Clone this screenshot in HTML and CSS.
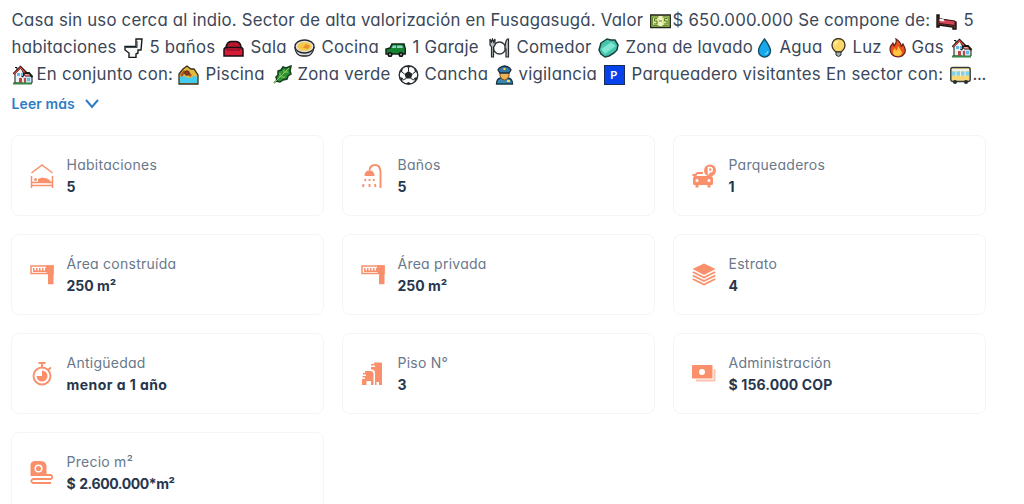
FILE: index.html
```
<!DOCTYPE html>
<html lang="es">
<head>
<meta charset="utf-8">
<title>Casa en Fusagasugá</title>
<link rel="stylesheet" href="styles.css">
</head>
<body>
<svg class="defs" aria-hidden="true">
  <symbol id="house" viewBox="0 0 21 20">
    <path d="M3 2.5h2v4M2 18h18v-7h-7L9 3 3 8v10" fill="#eef2f4" stroke="#111" stroke-width="1"/>
    <path d="M11 12h8v6h-8z" fill="#cfe1ed"/><path d="M1.5 9 8.5 2l6 6M10 12l2.5-4H17l3.5 4" fill="none" stroke="#151515" stroke-width="2.2"/>
    <path d="M2 9 8.500 2.600 13 7.500M12 10h6" fill="none" stroke="#df4937" stroke-width="1.200"/>
    <path d="M5 8h3v3H5zM9 8h2v3H9zM15 13h3v3h-3z" fill="#63b9e7"/><path d="M7 13h3v5H7zM12 13h2v5h-2z" fill="#b94940"/>
    <path d="M1 18.500h19" stroke="#358746" stroke-width="2"/>
  </symbol>
</svg>
<main class="page">
  <section class="description">
    <div class="line line-one">
      <span>Casa sin uso cerca al indio. Sector de alta valorización en Fusagasugá. Valor</span>
      <svg class="emoji" viewBox="0 0 21 20"><path d="M.7 4h19.600v12.500H.7z" fill="#a9c75b" stroke="#20251b" stroke-width="1.300"/><path d="M2.500 6h15.700v8.500H2.500z" fill="#d2e48e" stroke="#698b36"/><path d="M8.500 5h4v10h-4z" fill="#f2f1bf"/><path d="M7 7.500H4.500V10H7v3H4M17 7.500h-2.500V10H17v3h-3M9 10h3" stroke="#587c29" fill="none"/></svg>
      <span>$ 650.000.000 Se compone de:</span>
      <svg class="emoji" viewBox="0 0 21 20"><path d="M1 4v12h2v-2l14 2v2h3v-7L3 8V4z" fill="#713c32" stroke="#17100f" stroke-width="1.400"/><path d="m5 8 14 2v4.500L3 12.500V9z" fill="#d84558" stroke="#351718"/><path d="M3.500 8h4l1 2.500-5-.5z" fill="#eef4f7"/></svg>
      <span>5</span>
    </div>
    <div class="line line-two">
      <span>habitaciones</span>
      <svg class="emoji" viewBox="0 0 21 20"><path d="M12 1h6l-1 11h-3v3l-2 1v3.500H5V15l-4-3V8.500h11z" fill="#f7f8f8" stroke="#161a1c" stroke-width="1.400"/><path d="M1.500 9.500h12M13 3v6" stroke="#424b50" stroke-width="1.200"/></svg>
      <span>5 baños</span>
      <svg class="emoji" viewBox="0 0 21 20"><path d="M3 12V9q1-5 5-5.500h5Q17.500 4 18 9v3" fill="#b8182d" stroke="#1b1114" stroke-width="1.600"/><path d="M1 12q0-2.500 2.500-2.500h14q2.500 0 2.500 2.500v6H1z" fill="#d91b38" stroke="#1b1114" stroke-width="1.500"/><path d="M4 10v2h13v-2" fill="none" stroke="#6c1020"/></svg>
      <span>Sala</span>
      <svg class="emoji" viewBox="0 0 21 20"><path d="M.8 9q1 9 7.700 9h4q6 0 7.700-9" fill="#d8dadd" stroke="#25282a" stroke-width="1.300"/><ellipse cx="10.500" cy="8.500" rx="9.500" ry="6.500" fill="#e4e6e8" stroke="#25282a" stroke-width="1.300"/><ellipse cx="10.500" cy="8.500" rx="7.300" ry="4.500" fill="#f6c94a"/><path d="m5 9 4 1 3-4 4 2-2 3-4-1z" fill="#e9902c"/></svg>
      <span>Cocina</span>
      <svg class="emoji" viewBox="0 0 21 20"><path d="M1 16v-5l4-1 2-4h12l1.300 5v5z" fill="#168331" stroke="#102c18" stroke-width="1.500"/><path d="M6.500 10 8 7.500h3V10zM12 7.500h5l1 2.500h-6z" fill="#8bd3c5"/><circle cx="5" cy="16.500" r="1.800" fill="#9ba3a0" stroke="#111" stroke-width="1.500"/><circle cx="16" cy="16.500" r="1.800" fill="#9ba3a0" stroke="#111" stroke-width="1.500"/></svg>
      <span>1 Garaje</span>
      <svg class="emoji" viewBox="0 0 21 20"><circle cx="10.500" cy="10" r="6" fill="#fff" stroke="#35393b" stroke-width="1.400"/><path d="M1 1v6l1.500 2v10h2V9L6 7V1L4.500 4 3.500 1 2.500 4zM18.500 1Q16 3 16 11h1v8h2.500V1z" fill="#b9bec0" stroke="#272b2d" stroke-width="1.200"/></svg>
      <span>Comedor</span>
      <svg class="emoji" viewBox="0 0 21 20"><path d="m3 5 3-2 3-2 4 1 4 0 3 5-1 5-3 3-5 3-4 1-4-3-2-4z" fill="#45c5ad" stroke="#193f3a" stroke-width="1.500"/><path d="m3 11 10-7 5 4-11 8z" fill="#7ee8d3" stroke="#5bd0bc"/></svg>
      <span>Zona de lavado</span>
      <svg class="emoji" viewBox="0 0 21 20"><path d="M10.500 1Q4.500 9 4.500 13a6 6 0 0 0 12 0q0-4-6-12z" fill="#16a8e8" stroke="#124a67" stroke-width="1.300"/><path d="M14 13q0 3-3 3" fill="none" stroke="#8be0ff"/></svg>
      <span>Agua</span>
      <svg class="emoji" viewBox="0 0 21 20"><path d="M8 14Q4 11 4 7a6.500 6.500 0 0 1 13 0q0 4-4 7z" fill="#fbd76a" stroke="#3d321f" stroke-width="1.300"/><path d="M8 14h5v3q-2.500 3-5 0z" fill="#a9b0b2" stroke="#262f34"/><path d="M7 7q0-3 3-3.500" fill="none" stroke="#fff0b8" stroke-width="1.500"/></svg>
      <span>Luz</span>
      <svg class="emoji" viewBox="0 0 21 20"><path d="M9 1q6 4 5 8l2-3q4 7 1 10-2 3-6 3-8-1-8-8 0-3 3-6l1 3q3-3 2-7z" fill="#ef5020" stroke="#5f2419" stroke-width="1.200"/><path d="M11 8q4 6 4 7-1 3-4.500 3Q6 18 6 14q0-2 2-4l1 3q2-2 2-5z" fill="#ffc83d"/></svg>
      <span>Gas</span>
      <svg class="emoji"><use href="#house"/></svg>
    </div>
    <div class="line line-three">
      <svg class="emoji"><use href="#house"/></svg>
      <span>En conjunto con:</span>
      <svg class="emoji" viewBox="0 0 21 20"><path d="M1 9 5 4l4-3 4 3h3l4 6v9H1z" fill="#e5b93e" stroke="#36301c" stroke-width="1.300"/><path d="M2 12q3-2 6 0t6 0 5 0v6H2z" fill="#45cbed"/><path d="m3 11 3-4 4 1 3 3" fill="none" stroke="#a94e28" stroke-width="2.500"/><circle cx="9" cy="8" r="2.200" fill="#9a3e20" stroke="#4c2615"/></svg>
      <span>Piscina</span>
      <svg class="emoji" viewBox="0 0 21 20"><path d="m5 16-1-4 2-2V6l3-1 2-3 3 1 5-2-1 5 1 3-3 2-1 3-4 1-3 2-4-1-2 2" fill="#299238" stroke="#163d20" stroke-width="1.500"/><path d="M2 18 17 3M8 12V8M12 8V5M13 7h3M9 12h4" fill="none" stroke="#91cb4c"/></svg>
      <span>Zona verde</span>
      <svg class="emoji" viewBox="0 0 21 20"><circle cx="10.500" cy="10" r="9.300" fill="#fff" stroke="#292f32" stroke-width="1.400"/><path d="m10.500 6 4 3-1.500 4.500H8L6.500 9zM7 1l3.500 2L14 1zM1 8l3-1 1-4zM20 8l-3-1-1-4zM4 17l1-4-3-1zM17 17l-1-4 3-1zM7 19l3.500-2 3.500 2z" fill="#202628"/><path d="M10.500 6V3M6.500 9 4 7M14.500 9 17 7M8 13.500 5 15M13 13.500l3 1.500" stroke="#202628"/></svg>
      <span>Cancha</span>
      <svg class="emoji police" viewBox="0 0 21 20"><path d="M2.500 19q0-5 4-6h8q4 1 4 6z" fill="#3c86b2" stroke="#173849" stroke-width="1.300"/><path d="M6 6h9v5q-1.500 4-4.500 4T6 11z" fill="#efb253" stroke="#815327"/><path d="M4 5q1-3 6.500-4Q16 2 17 5l-2 3H6z" fill="#3477a4" stroke="#162d40" stroke-width="1.300"/><path d="M10.500 3v2M13 16h3" stroke="#ffd54b" stroke-width="2"/></svg>
      <span>vigilancia</span>
      <span class="parking-emoji">P</span>
      <span>Parqueadero visitantes En sector con:</span>
      <svg class="emoji" viewBox="0 0 21 20"><rect x=".8" y="2.500" width="19.400" height="14" rx="2" fill="#f8d878" stroke="#343b3c" stroke-width="1.400"/><path d="M2 4h17v2H2z" fill="#eef2ef"/><path d="M2 6.500h17v4H2z" fill="#7ed3ec"/><path d="M6 6v5M10.500 6v5M15 6v5" stroke="#edf3e9"/><circle cx="5" cy="17" r="2" fill="#282f31"/><circle cx="16" cy="17" r="2" fill="#282f31"/></svg>
      <span class="ellipsis">...</span>
    </div>
    <a class="more"><span>Leer más</span><svg width="14" height="10" viewBox="0 0 14 10"><path d="m1.500 1.500 5.500 6.500 5.500-6.500" fill="none" stroke="currentColor" stroke-width="2" stroke-linecap="round"/></svg></a>
  </section>

  <section class="cards">
    <article class="card"><svg class="icon" viewBox="0 0 24 24"><path d="m1.500 9 10.500-8 10.500 8" class="stroke"/><path d="M1.500 12v12M22.500 12v12M1.500 18.500h21M1.500 21.500h21" class="stroke"/><circle cx="5.500" cy="15.500" r="1.500"/><path d="M8 18v-3l4-1.500 5 1q3 1 4 3.500z"/></svg><div><p>Habitaciones</p><strong>5</strong></div></article>
    <article class="card"><svg class="icon" viewBox="0 0 24 24"><path d="M19.500 24V7.500Q19 1 14 1T8.500 6.500" class="stroke thick"/><path d="M3.500 12q0-5.500 5-5.500t5 5.500z"/><path d="m4.500 15-.5 2M8.500 15v2M12.500 15l.5 2M2.500 20l-.5 3M8.500 20v3M14 20l.5 3" class="stroke thick"/></svg><div><p>Baños</p><strong>5</strong></div></article>
    <article class="card"><svg class="icon" viewBox="0 0 24 24"><circle cx="18" cy="6.500" r="6"/><path d="M16.500 10.500V3.500H18a2.200 2.200 0 0 1 0 4.400h-1.500" fill="none" stroke="#fff" stroke-width="1.600"/><path d="M3 13q1-4 3-4h5M.5 11h3" class="stroke thick"/><path fill-rule="evenodd" d="M3 12h15q3 0 3 3v4q0 2-1 2H2q-1 0-1-2v-4q0-3 2-3zm.5 4.500a1.500 1.500 0 1 0 3 0a1.500 1.500 0 1 0-3 0zm12 0a1.500 1.500 0 1 0 3 0a1.500 1.500 0 1 0-3 0z"/><path d="M5 21v2.500M17 21v2.500" class="stroke heavy"/></svg><div><p>Parqueaderos</p><strong>1</strong></div></article>
    <article class="card"><svg class="icon" viewBox="0 0 24 24"><path d="M1 3h22v7.500H1z" class="stroke"/><path d="M17 2.300h6.500v19H18V11l-2-2V3zM3 5h1.500v2.500H6V5h1.500v2.500H9V5h1.500v2.500H12V5h1.500v2.500H15V5h1v4H3z"/></svg><div><p>Área construída</p><strong>250 m²</strong></div></article>
    <article class="card"><svg class="icon" viewBox="0 0 24 24"><path d="M1 3h22v7.500H1z" class="stroke"/><path d="M17 2.300h6.500v19H18V11l-2-2V3zM3 5h1.500v2.500H6V5h1.500v2.500H9V5h1.500v2.500H12V5h1.500v2.500H15V5h1v4H3z"/></svg><div><p>Área privada</p><strong>250 m²</strong></div></article>
    <article class="card"><svg class="icon" viewBox="0 0 24 24"><path d="m12 .5 11.500 5.500L12 12 .5 6z"/><path d="m.8 9 11.200 5.500L23.200 9M.8 12.500 12 18l11.200-5.500M.8 16 12 21.500 23.200 16" class="stroke thick"/></svg><div><p>Estrato</p><strong>4</strong></div></article>
    <article class="card"><svg class="icon" viewBox="0 0 24 24"><circle cx="12" cy="14" r="8.500" class="stroke thick"/><path d="M12 5V1M8.500 1h7M18 8l3-2.500" class="stroke thick"/><path d="M12 8.500V14H6.500a5.500 5.500 0 1 0 5.500-5.500z"/></svg><div><p>Antigüedad</p><strong class="age">menor a 1 año</strong></div></article>
    <article class="card"><svg class="icon" viewBox="0 0 24 24"><path d="M10 7.500V5h4V3.500h-4V2h3V.500h8V23h-3v-3h-2.500v3H14V11q0-3.500-3-3.500zM4 9h5q3.500 0 3.500 3v11H10v-4H5.500v4H1v-6h3v-1.500H1.500V14H5v-1.500H2V11h2z"/></svg><div><p>Piso N°</p><strong>3</strong></div></article>
    <article class="card"><svg class="icon" viewBox="0 0 24 24"><path d="M4 18.500h18.500V7" class="stroke pale"/><rect y="3" width="20.500" height="13.500" rx="1"/><circle cx="10" cy="10" r="3" fill="#fff"/></svg><div><p>Administración</p><strong class="fee">$ 156.000 COP</strong></div></article>
    <article class="card"><svg class="icon" viewBox="0 0 24 24"><path d="M.5 15V4.500Q.5 0 5 0h6q5.500 0 5.500 6v9z"/><circle cx="8.500" cy="7.500" r="3.300" fill="none" stroke="#fff" stroke-width="1.500"/><path d="M12 14h9q2.500 1.800 0 4H3q-3.500 2 0 4h18" class="stroke thick"/></svg><div><p>Precio m²</p><strong class="rate">$ 2.600.000*m²</strong></div></article>
  </section>
</main>
</body>
</html>
```
FILE: styles.css
```
* { box-sizing: border-box; }
body { margin: 0; background: #fff; font-family: Inter, "Noto Sans", sans-serif; font-feature-settings: "cv11"; color: #3b4759; overflow: hidden; }
.defs { position: absolute; width: 0; height: 0; }
.page { width: 1024px; height: 504px; padding: 7px 0 0 11px; overflow: hidden; }
.description { padding-left: .5px; }
.line { display: grid; height: 27px; align-items: center; font-size: 16.800px; font-weight: 390; line-height: 27px; white-space: nowrap; }
.line-one { grid-template-columns: 638px 23px 263px 28px 22px; letter-spacing: .2px; }
.line-two { grid-template-columns: 112px 26px 73px 28px 43px 28px 63px 28px 76px 28px 81px 28px 128px 26px 48px 25px 34px 25px 39px 24px; letter-spacing: .22px; }
.line-three { grid-template-columns: 25px 141px 28px 66px 26px 100px 27px 71px 23px 85px 28px 318px 23px 20px; letter-spacing: .25px; }
.emoji { display: block; width: 21px; height: 20px; }
.police { margin-left: -2px; }
.parking-emoji { width: 21px; height: 20px; border: 1px solid #182d58; background: #0643ed; color: #fff; font-size: 11px; font-weight: 600; line-height: 18px; text-align: center; }
.ellipsis { letter-spacing: -.3px; }
.more { display: flex; align-items: center; gap: 10px; height: 27px; margin-top: 4px; padding-bottom: 4px; color: #2d7dc5; font-size: 14px; font-weight: 600; letter-spacing: .1px; }
.cards { display: grid; grid-template-columns: repeat(3, 313px); grid-auto-rows: 81px; gap: 18px; margin-top: 16px; }
.card { display: flex; align-items: center; gap: 12.500px; padding: 0 18px; border: 1px solid #f4f5f7; border-radius: 8px; }
.card p { margin: 0; height: 21px; color: #69788a; font-size: 14px; font-weight: 370; line-height: 19px; letter-spacing: .25px; }
.card strong { display: block; height: 21px; color: #26364d; font-size: 14px; font-weight: 650; line-height: 21px; }
.card .age { letter-spacing: .45px; }
.card .fee { letter-spacing: .12px; }
.card .rate { letter-spacing: -.4px; word-spacing: 1px; }
.icon { width: 24px; height: 24px; fill: #fa906b; flex: none; }
.stroke { fill: none; stroke: #fa906b; stroke-width: 1.5; }
.thick { stroke-width: 1.9; }
.heavy { stroke-width: 3; }
.pale { stroke: #fcc3ae; stroke-width: 2; }
```
